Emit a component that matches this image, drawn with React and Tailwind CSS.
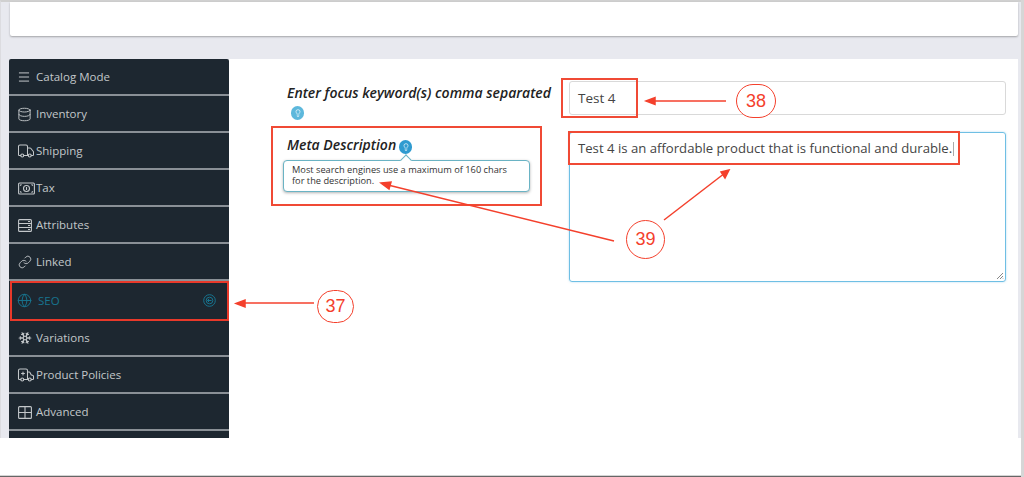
import React from 'react';
import { Menu, Database, Truck, Link, Globe, Snowflake, Ambulance, Lightbulb } from 'lucide-react';

const TaxIcon = () => (
  <svg width="17" height="13" viewBox="0 0 17 13" fill="none" stroke="currentColor" strokeWidth="1.1">
    <rect x="0.600" y="1" width="15.800" height="11" rx="1" />
    <circle cx="8.500" cy="6.500" r="3" />
    <path d="M8.500 5v3M2 3.500 3.500 2.500M2 9.500l1.500 1M15 3.500l-1.500-1M15 9.500l-1.500 1" />
  </svg>
);

const AttrIcon = () => (
  <svg width="14" height="13" viewBox="0 0 14 13" fill="none" stroke="currentColor" strokeWidth="1.1">
    <rect x="0.600" y="0.600" width="12.800" height="11.800" rx="1" />
    <path d="M0.600 4.500h12.800M0.600 8.500h12.800M10 2.500h2M10 6.500h2M10 10.500h2" />
  </svg>
);

const GridIcon = () => (
  <svg width="14" height="13" viewBox="0 0 14 13" fill="none" stroke="currentColor" strokeWidth="1.1">
    <rect x="0.600" y="0.600" width="12.800" height="11.800" rx="1" />
    <path d="M7 0.600v11.800M0.600 6.500h12.800" />
  </svg>
);

const RingArrow = () => (
  <svg width="13" height="13" viewBox="0 0 13 13" fill="none" stroke="currentColor" strokeWidth="1">
    <circle cx="6.500" cy="6.500" r="5.800" />
    <circle cx="6.500" cy="6.500" r="3.300" />
    <path d="M4.500 6.500h4M6.200 4.800 4.500 6.500l1.700 1.700" />
  </svg>
);

const items = [
  { label: 'Catalog Mode', icon: <Menu size={14} strokeWidth={1.7} className="-ml-[1px]" /> },
  { label: 'Inventory', icon: <Database size={15} strokeWidth={1.5} className="-ml-[1px]" /> },
  { label: 'Shipping', icon: <Truck size={18} strokeWidth={1.4} className="-ml-[1px]" /> },
  { label: 'Tax', icon: <TaxIcon /> },
  { label: 'Attributes', icon: <AttrIcon /> },
  { label: 'Linked', icon: <Link size={14} strokeWidth={1.5} /> },
  { label: 'SEO', icon: <Globe size={15} strokeWidth={1.5} className="-ml-[1px]" />, active: true },
  { label: 'Variations', icon: <Snowflake size={14} strokeWidth={2} /> },
  { label: 'Product Policies', icon: <Ambulance size={18} strokeWidth={1.4} className="-ml-[1px]" /> },
  { label: 'Advanced', icon: <GridIcon /> },
];

const SideItem = ({ item }) => {
  if (item.active) {
    return (
      <div className="h-[39px] flex items-center pl-[9px] pr-[13px] text-[#17748f]">
        <span className="w-[20px] shrink-0">{item.icon}</span>
        <span className="flex-1">{item.label}</span>
        <RingArrow />
      </div>
    );
  }
  return (
    <div className="h-[37px] pt-px flex items-center pl-[9px] border-b-2 border-[#8a9096] text-[#c3c7ca]">
      <span className="w-[18px] shrink-0">{item.icon}</span>
      <span>{item.label}</span>
    </div>
  );
};

const Hint = ({ dark }) => (
  <span className={`inline-flex items-center justify-center w-[13px] h-[14px] rounded-full text-white ${dark ? 'bg-[#2f9bd0]' : 'bg-[#5db8dc]'}`}>
    <Lightbulb size={8} strokeWidth={2} />
  </span>
);

const App = () => {
  return (
    <div className="relative w-[1024px] h-[477px] overflow-hidden bg-white border-r-[3px] border-[#d6d6d6] font-['Open_Sans',sans-serif]">
      <div className="h-[438px] border-t-2 border-[#d0d0d0] bg-[#e8e9ef] pl-[9px] pr-[3px] flex flex-col border-l border-l-[#dcdce0]">
        <div className="h-[34px] shrink-0 bg-white rounded-b-[2px] shadow-[0_1px_2px_rgba(0,0,0,0.3)]"></div>
        <div className="flex flex-1 mt-[23px] -ml-px min-h-0">
          <div className="w-[220px] shrink-0 bg-[#1d2730] text-[11.500px] overflow-hidden rounded-t-[2px]">
            {items.map((item) => <SideItem key={item.label} item={item} />)}
            <div className="h-[8px]"></div>
          </div>
          <div className="flex-1 bg-white pt-[22px] pl-[58px] pr-[12px] grid grid-cols-[282px_1fr] gap-y-[17px] content-start">
            <div className="h-[34px]">
              <div className="mt-[2px] text-[14px] leading-[20px] font-semibold italic text-[#222]">Enter focus keyword(s) comma separated</div>
              <div className="ml-[4px] leading-none"><Hint /></div>
            </div>
            <div className="h-[34px] border border-[#d9d9d9] rounded-[3px] px-[8px] flex items-center text-[13.500px] text-[#444]">Test 4</div>
            <div>
              <div className="mt-[3px] flex items-center gap-[3px] text-[14px] leading-[20px] font-semibold italic text-[#222]">
                Meta Description <span className="mt-[3px] leading-none"><Hint dark /></span>
              </div>
              <div className="relative mt-[5px] -ml-[4px] w-[247px] h-[32px] border-[1.500px] border-[#6ab3c4] rounded-[4px] bg-white px-[8px] py-[3px] text-[9.250px] leading-[11px] text-[#333] shadow-[0_1px_3px_rgba(0,0,0,0.3)]">
                Most search engines use a maximum of 160 chars for the description.
                <span className="absolute -top-[5px] left-[118px] w-[8px] h-[8px] rotate-45 bg-white border-l-[1.500px] border-t-[1.500px] border-[#6ab3c4]"></span>
              </div>
            </div>
            <div className="relative h-[150px] border border-[#6fbfe4] rounded-[3px] px-[8px] py-[5px] text-[13.150px] leading-[20px] text-[#444] shadow-[0_0_2px_rgba(90,180,225,0.5)]">
              Test 4 is an affordable product that is functional and durable.<span className="inline-block w-px h-[14px] ml-[1px] align-middle bg-[#aaa]"></span>
              <svg className="absolute right-[1px] bottom-[1px]" width="8" height="8" viewBox="0 0 8 8" stroke="#888"><path d="M1 7 7 1M4 7l3-3M6.500 7 7 6.500" /></svg>
            </div>
          </div>
        </div>
      </div>
      <div className="absolute left-0 right-0 bottom-0 h-[2px] bg-[#d4d4d4] border-b border-[#666]"></div>

      {/* annotations */}
      <div className="absolute left-[10px] top-[281px] w-[219px] h-[40px] border-2 border-[#e8392a]"></div>
      <div className="absolute left-[271px] top-[126px] w-[271px] h-[80px] border-2 border-[#f04a35]"></div>
      <div className="absolute left-[561px] top-[78px] w-[77px] h-[40px] border-2 border-[#f04a35]"></div>
      <div className="absolute left-[568px] top-[131px] w-[392px] h-[34px] border-2 border-[#f04a35]"></div>
      <svg className="absolute left-0 top-0" width="1024" height="477" fill="none" stroke="#f4402c" strokeWidth="1.5">
        <path d="M314 303H243" />
        <path d="M236 303.500 245 300V307Z" fill="#f4402c" />
        <path d="M726 101H654" />
        <path d="M646 101 655 97.500V104.500Z" fill="#f4402c" />
        <path d="M614 241 388 185" />
        <path d="M381 183 391 182 389 189Z" fill="#f4402c" />
        <path d="M664 220 725 173" />
        <path d="M729 170 721 172 725 178Z" fill="#f4402c" />
      </svg>
      {[
        { n: '37', box: 'left-[317px] top-[290px] w-[37px] h-[33px]' },
        { n: '38', box: 'left-[736px] top-[84px] w-[40px] h-[34px]' },
        { n: '39', box: 'left-[626px] top-[220px] w-[39px] h-[39px]' },
      ].map((c) => (
        <div key={c.n} className={`absolute ${c.box} rounded-full border-[1.500px] border-[#f4402c] bg-white flex items-center justify-center text-[#f4402c] text-[18px] font-['Liberation_Sans',sans-serif]`}>{c.n}</div>
      ))}
    </div>
  );
};

export default App;
